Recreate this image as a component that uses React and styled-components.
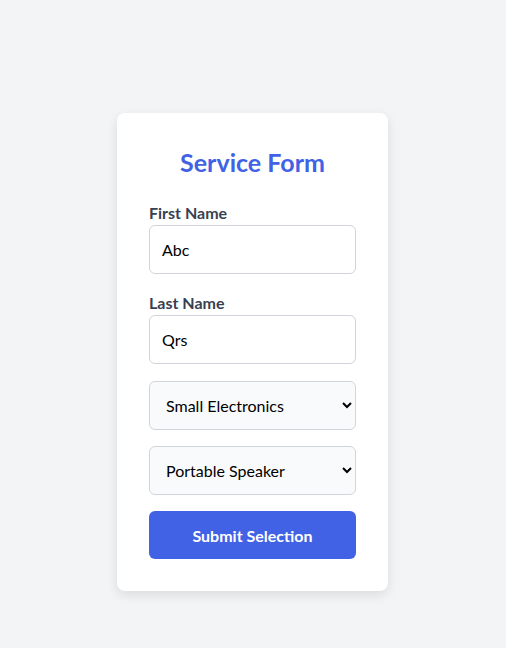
import React, { useState } from "react";
import styled, { createGlobalStyle } from "styled-components";

const GlobalStyle = createGlobalStyle`
  * {
    box-sizing: border-box;
  }

  body {
    margin: 0;
    background: #f3f4f6;
    font-family: "Lato", "Noto Sans", sans-serif;
  }
`;

const App = () => {
  const [firstName, setFirstName] = useState("Abc");
  const [lastName, setLastName] = useState("Qrs");
  const [category, setCategory] = useState("small");
  const [item, setItem] = useState("speaker");

  return (
    <Page>
      <GlobalStyle />
      <Card onSubmit={(e) => e.preventDefault()}>
        <Title>Service Form</Title>
        <Field>
          <Label htmlFor="first">First Name</Label>
          <Input
            id="first"
            value={firstName}
            onChange={(e) => setFirstName(e.target.value)}
          />
        </Field>
        <Field>
          <Label htmlFor="last">Last Name</Label>
          <Input
            id="last"
            value={lastName}
            onChange={(e) => setLastName(e.target.value)}
          />
        </Field>
        <Select value={category} onChange={(e) => setCategory(e.target.value)}>
          <option value="small">Small Electronics</option>
          <option value="large">Large Appliances</option>
        </Select>
        <Select value={item} onChange={(e) => setItem(e.target.value)}>
          <option value="speaker">Portable Speaker</option>
          <option value="headphones">Headphones</option>
        </Select>
        <Button type="submit">Submit Selection</Button>
      </Card>
    </Page>
  );
};

export default App;

const Page = styled.div`
  min-height: 100vh;
  display: flex;
  justify-content: center;
  align-items: flex-start;
  padding: 113px 1px 0 0;
`;

const Card = styled.form`
  width: 271px;
  background: #fff;
  border-radius: 8px;
  box-shadow: 0 4px 12px rgba(0, 0, 0, 0.1);
  padding: 32px;
  display: flex;
  flex-direction: column;
  gap: 16px;
`;

const Title = styled.h2`
  margin: 0 0 6px;
  text-align: center;
  font-size: 25px;
  line-height: 34px;
  font-weight: 700;
  color: #4162e4;
`;

const Field = styled.div`
  display: flex;
  flex-direction: column;
  margin-bottom: 1px;
`;

const Label = styled.label`
  font-size: 16px;
  line-height: 24px;
  font-weight: 700;
  color: #374151;
`;

const Input = styled.input`
  width: 100%;
  height: 49px;
  padding: 0 12px;
  border: 1px solid #d1d5db;
  border-radius: 6px;
  font-family: inherit;
  font-size: 16px;
  color: #000;
  background: #fff;
  outline: none;
`;

const Select = styled.select`
  width: 100%;
  height: 49px;
  padding: 0 8px 0 12px;
  border: 1px solid #d1d5db;
  border-radius: 6px;
  font-family: inherit;
  font-size: 16px;
  color: #000;
  background: #f9fafb;
`;

const Button = styled.button`
  height: 48px;
  border: none;
  border-radius: 6px;
  background: #4162e4;
  color: #fff;
  font-family: inherit;
  font-size: 16px;
  font-weight: 700;
  cursor: pointer;
`;
